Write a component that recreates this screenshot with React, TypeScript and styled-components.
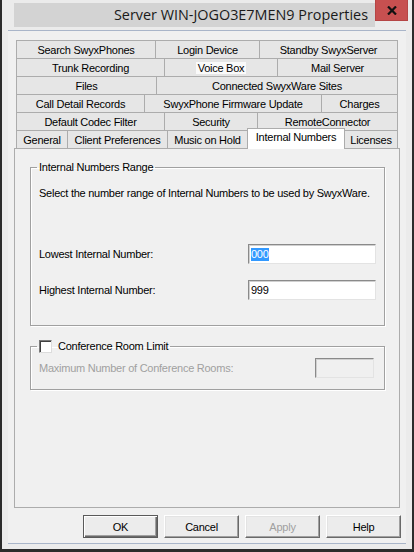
import styled, { createGlobalStyle, css } from "styled-components";

const GlobalStyle = createGlobalStyle`
  html, body {
    margin: 0;
    padding: 0;
    background: #2b2b2b;
  }
  body {
    font-family: "Liberation Sans", Arial, sans-serif;
    font-size: 11px;
    letter-spacing: -0.25px;
    color: #000;
  }
`;

const Window = styled.div`
  width: 414px;
  height: 552px;
  box-sizing: border-box;
  background: #ebebeb;
  border-left: 2px solid #2b2b2b;
  border-right: 2px solid #2b2b2b;
  border-bottom: 3px solid #2b2b2b;
  display: flex;
  flex-direction: column;
`;

const TitleBar = styled.div`
  height: 30px;
  flex: none;
  display: flex;
  align-items: flex-start;
  padding: 0 4px 0 12px;
`;

const TitleText = styled.div`
  flex: 1;
  margin-top: 3px;
  height: 24px;
  background: #d3d3d3;
  display: flex;
  align-items: center;
  justify-content: flex-end;
  padding: 0 7px 1px 0;
  box-sizing: border-box;
  font-family: "Open Sans", "Liberation Sans", sans-serif;
  font-size: 14.4px;
  letter-spacing: 0;
  color: #1a1a1a;
  white-space: nowrap;
`;

const CloseButton = styled.div`
  width: 33px;
  height: 21px;
  box-sizing: border-box;
  background: #c75050;
  border: 1px solid #b54545;
  border-top: none;
  display: flex;
  align-items: center;
  justify-content: center;
`;

const Client = styled.div`
  flex: 1;
  margin: 0 6px 5px;
  background: #f0f0f0;
  border-top: 1px solid #a9b5c9;
  border-bottom: 1px solid #a9b5c9;
  padding-top: 9px;
  display: flex;
  flex-direction: column;
`;

const TabStrip = styled.div`
  margin-left: 8px;
  display: flex;
  flex-direction: column;
`;

const TabRow = styled.div`
  display: flex;
  height: 18px;
`;

const Tab = styled.div<{ $w: number; $active?: boolean }>`
  box-sizing: border-box;
  width: ${(p) => p.$w}px;
  height: 18px;
  border: 1px solid #acacac;
  border-bottom: none;
  background: #e6e6e6;
  display: flex;
  align-items: center;
  justify-content: center;
  padding-top: 1px;
  white-space: nowrap;

  & + & {
    margin-left: -1px;
  }

  ${(p) =>
    p.$active &&
    css`
      position: relative;
      z-index: 1;
      height: 21px;
      margin-top: -2px;
      background: #fff;
      align-items: flex-start;
      padding-top: 2px;
    `}
`;

const TabLabel = styled.span<{ $hot?: boolean }>`
  padding: 0 2px;
  ${(p) =>
    p.$hot &&
    css`
      background: #fafafa;
    `}
`;

const Panel = styled.div`
  margin-left: 6px;
  width: 386px;
  height: 360px;
  box-sizing: border-box;
  border: 1px solid #acacac;
  background: #f0f0f0;
  padding: 12px 14px 0 15px;
`;

const Group = styled.fieldset<{ $gap?: number }>`
  margin: ${(p) => p.$gap ?? 0}px 0 0;
  border: 1px solid #a0a0a0;
  box-shadow: inset 1px 1px 0 #fff, 1px 1px 0 #fff;
  padding: 0 8px 0 8px;
  min-width: 0;
`;

const Legend = styled.legend`
  margin-left: -2px;
  padding: 0 2px;
  line-height: 13px;
  display: flex;
  align-items: center;
  gap: 6px;
`;

const Description = styled.div`
  margin-top: 13px;
  line-height: 13px;
  white-space: nowrap;
`;

const FieldRow = styled.div<{ $gap: number; $last?: number }>`
  display: flex;
  align-items: center;
  justify-content: space-between;
  margin-top: ${(p) => p.$gap}px;
  margin-bottom: ${(p) => p.$last ?? 0}px;
  height: 20px;
`;

const FieldLabel = styled.span<{ $disabled?: boolean }>`
  color: ${(p) => (p.$disabled ? "#a0a0a0" : "#000")};
`;

const TextBox = styled.div<{ $w: number; $disabled?: boolean }>`
  box-sizing: border-box;
  width: ${(p) => p.$w}px;
  height: 20px;
  border: 1px solid;
  border-color: #8a8a8a #e3e3e3 #e3e3e3 #8a8a8a;
  box-shadow: inset 1px 1px 0 #d0d0d0;
  background: ${(p) => (p.$disabled ? "#f0f0f0" : "#fff")};
  margin-right: ${(p) => (p.$disabled ? 2 : 0)}px;
  padding: 0 0 0 2px;
  display: flex;
  align-items: center;
  line-height: 13px;
`;

const Selection = styled.span`
  background: #3399ff;
  color: #fff;
`;

const CheckBox = styled.span`
  width: 13px;
  height: 13px;
  box-sizing: border-box;
  border: 1px solid;
  border-color: #7a7a7a #dcdcdc #dcdcdc #7a7a7a;
  box-shadow: inset 1px 1px 0 #404040;
  background: #fff;
  flex: none;
`;

const ButtonBar = styled.div`
  margin-top: 7px;
  display: flex;
  justify-content: flex-end;
  gap: 6px;
  padding-right: 5px;
`;

const Button = styled.button<{ $default?: boolean }>`
  width: 75px;
  height: 23px;
  box-sizing: border-box;
  padding: 0;
  font-family: "Liberation Sans", Arial, sans-serif;
  font-size: 11px;
  letter-spacing: -0.25px;
  color: #000;
  background: #ececec;
  border: 1px solid;
  border-color: #fff #696969 #696969 #fff;
  box-shadow: inset -1px -1px 0 #a0a0a0, inset 1px 1px 0 #e3e3e3;

  &:disabled {
    color: #a0a0a0;
  }

  ${(p) =>
    p.$default &&
    css`
      border-color: #5a5a5a;
      box-shadow: inset 1px 1px 0 #fff, inset -1px -1px 0 #696969,
        inset -2px -2px 0 #a0a0a0;
    `}
`;

type TabDef = { label: string; w: number; active?: boolean; hot?: boolean };

const tabRows: TabDef[][] = [
  [
    { label: "Search SwyxPhones", w: 140 },
    { label: "Login Device", w: 105 },
    { label: "Standby SwyxServer", w: 139 },
  ],
  [
    { label: "Trunk Recording", w: 149 },
    { label: "Voice Box", w: 114, hot: true },
    { label: "Mail Server", w: 121 },
  ],
  [
    { label: "Files", w: 141 },
    { label: "Connected SwyxWare Sites", w: 242 },
  ],
  [
    { label: "Call Detail Records", w: 129 },
    { label: "SwyxPhone Firmware Update", w: 178 },
    { label: "Charges", w: 77 },
  ],
  [
    { label: "Default Codec Filter", w: 149 },
    { label: "Security", w: 94 },
    { label: "RemoteConnector", w: 141 },
  ],
  [
    { label: "General", w: 52 },
    { label: "Client Preferences", w: 101 },
    { label: "Music on Hold", w: 81 },
    { label: "Internal Numbers", w: 98, active: true },
    { label: "Licenses", w: 54 },
  ],
];

export default function App() {
  return (
    <>
      <GlobalStyle />
      <Window>
        <TitleBar>
          <TitleText>Server WIN-JOGO3E7MEN9 Properties</TitleText>
          <CloseButton>
            <svg width="10" height="9" viewBox="0 0 10 9">
              <path d="M1 0.5 L9 8.5 M9 0.5 L1 8.5" stroke="#111" strokeWidth="2.2" />
            </svg>
          </CloseButton>
        </TitleBar>

        <Client>
          <TabStrip>
            {tabRows.map((row, i) => (
              <TabRow key={i}>
                {row.map((t) => (
                  <Tab key={t.label} $w={t.w} $active={t.active}>
                    <TabLabel $hot={t.hot}>{t.label}</TabLabel>
                  </Tab>
                ))}
              </TabRow>
            ))}
          </TabStrip>

          <Panel>
            <Group>
              <Legend>Internal Numbers Range</Legend>
              <Description>
                Select the number range of Internal Numbers to be used by SwyxWare.
              </Description>
              <FieldRow $gap={44}>
                <FieldLabel>Lowest Internal Number:</FieldLabel>
                <TextBox $w={128}>
                  <Selection>000</Selection>
                </TextBox>
              </FieldRow>
              <FieldRow $gap={16} $last={25}>
                <FieldLabel>Highest Internal Number:</FieldLabel>
                <TextBox $w={128}>999</TextBox>
              </FieldRow>
            </Group>

            <Group $gap={14}>
              <Legend>
                <CheckBox />
                Conference Room Limit
              </Legend>
              <FieldRow $gap={5} $last={11}>
                <FieldLabel $disabled>Maximum Number of Conference Rooms:</FieldLabel>
                <TextBox $w={59} $disabled />
              </FieldRow>
            </Group>
          </Panel>

          <ButtonBar>
            <Button $default>OK</Button>
            <Button>Cancel</Button>
            <Button disabled>Apply</Button>
            <Button>Help</Button>
          </ButtonBar>
        </Client>
      </Window>
    </>
  );
}
